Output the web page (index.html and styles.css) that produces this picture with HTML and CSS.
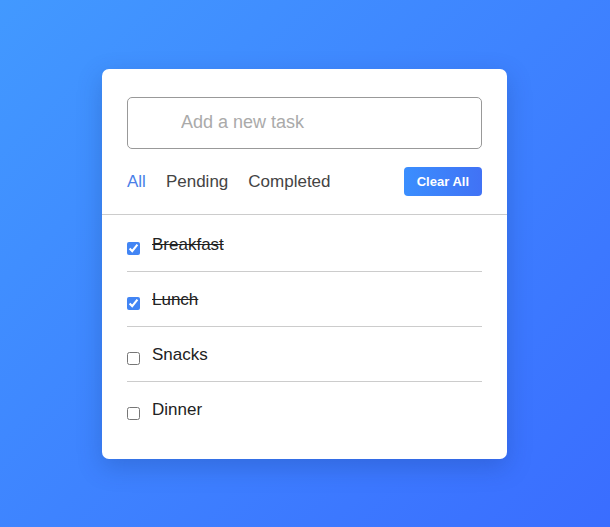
FILE: index.html
```html
<!DOCTYPE html>
<html lang="en">
<head>
<meta charset="utf-8">
<title>Todo</title>
<link rel="stylesheet" href="styles.css">
</head>
<body>
<main class="card">
  <input class="task-input" type="text" placeholder="Add a new task">
  <div class="toolbar">
    <nav class="filters">
      <span class="filter active">All</span>
      <span class="filter">Pending</span>
      <span class="filter">Completed</span>
    </nav>
    <button class="clear-btn">Clear All</button>
  </div>
  <ul class="task-list">
    <li class="task"><input type="checkbox" checked><span class="task-name done">Breakfast</span></li>
    <li class="task"><input type="checkbox" checked><span class="task-name done">Lunch</span></li>
    <li class="task"><input type="checkbox"><span class="task-name">Snacks</span></li>
    <li class="task"><input type="checkbox"><span class="task-name">Dinner</span></li>
  </ul>
</main>
</body>
</html>
```

FILE: styles.css
```css
* { box-sizing: border-box; }
html, body { height: 100%; }
body {
  margin: 0;
  padding-right: 1px;
  font-family: "Liberation Sans", Arial, sans-serif;
  background: linear-gradient(135deg, #4299ff 0%, #3a6dff 100%);
  display: flex;
  align-items: center;
  justify-content: center;
}
.card {
  width: 405px;
  background: #fff;
  border-radius: 7px;
  padding: 28px 25px 23px;
  box-shadow: 0 8px 24px rgba(20, 50, 120, 0.25);
}
.task-input {
  display: block;
  width: 100%;
  height: 52px;
  border: 1px solid #999;
  border-radius: 5px;
  padding: 0 12px 0 53px;
  font-family: inherit;
  font-size: 18px;
  color: #333;
  outline: none;
}
.task-input::placeholder { color: #aaa; }
.toolbar {
  display: flex;
  align-items: center;
  justify-content: space-between;
  margin: 18px 0;
}
.filters {
  display: flex;
  gap: 20px;
  padding-top: 1px;
}
.filter {
  font-size: 17px;
  color: #444;
  cursor: pointer;
}
.filter.active { color: #4a80e8; }
.clear-btn {
  height: 29px;
  padding: 0 13px;
  border: none;
  border-radius: 4px;
  background: linear-gradient(90deg, #3a8efe, #4172f5);
  color: #fff;
  font-family: inherit;
  font-weight: bold;
  font-size: 13px;
  cursor: pointer;
}
.task-list {
  list-style: none;
  margin: 0 -25px;
  padding: 2px 25px 0;
  border-top: 1px solid #ccc;
}
.task {
  display: flex;
  align-items: flex-start;
  padding: 17px 0 16px;
  border-bottom: 1px solid #ccc;
}
.task:last-child { border-bottom: none; }
.task input {
  width: 13px;
  height: 13px;
  margin: 8px 12px 0 0;
  accent-color: #4285f4;
}
.task-name {
  font-size: 17px;
  line-height: 21px;
  color: #222;
}
.task-name.done { text-decoration: line-through; }
```
